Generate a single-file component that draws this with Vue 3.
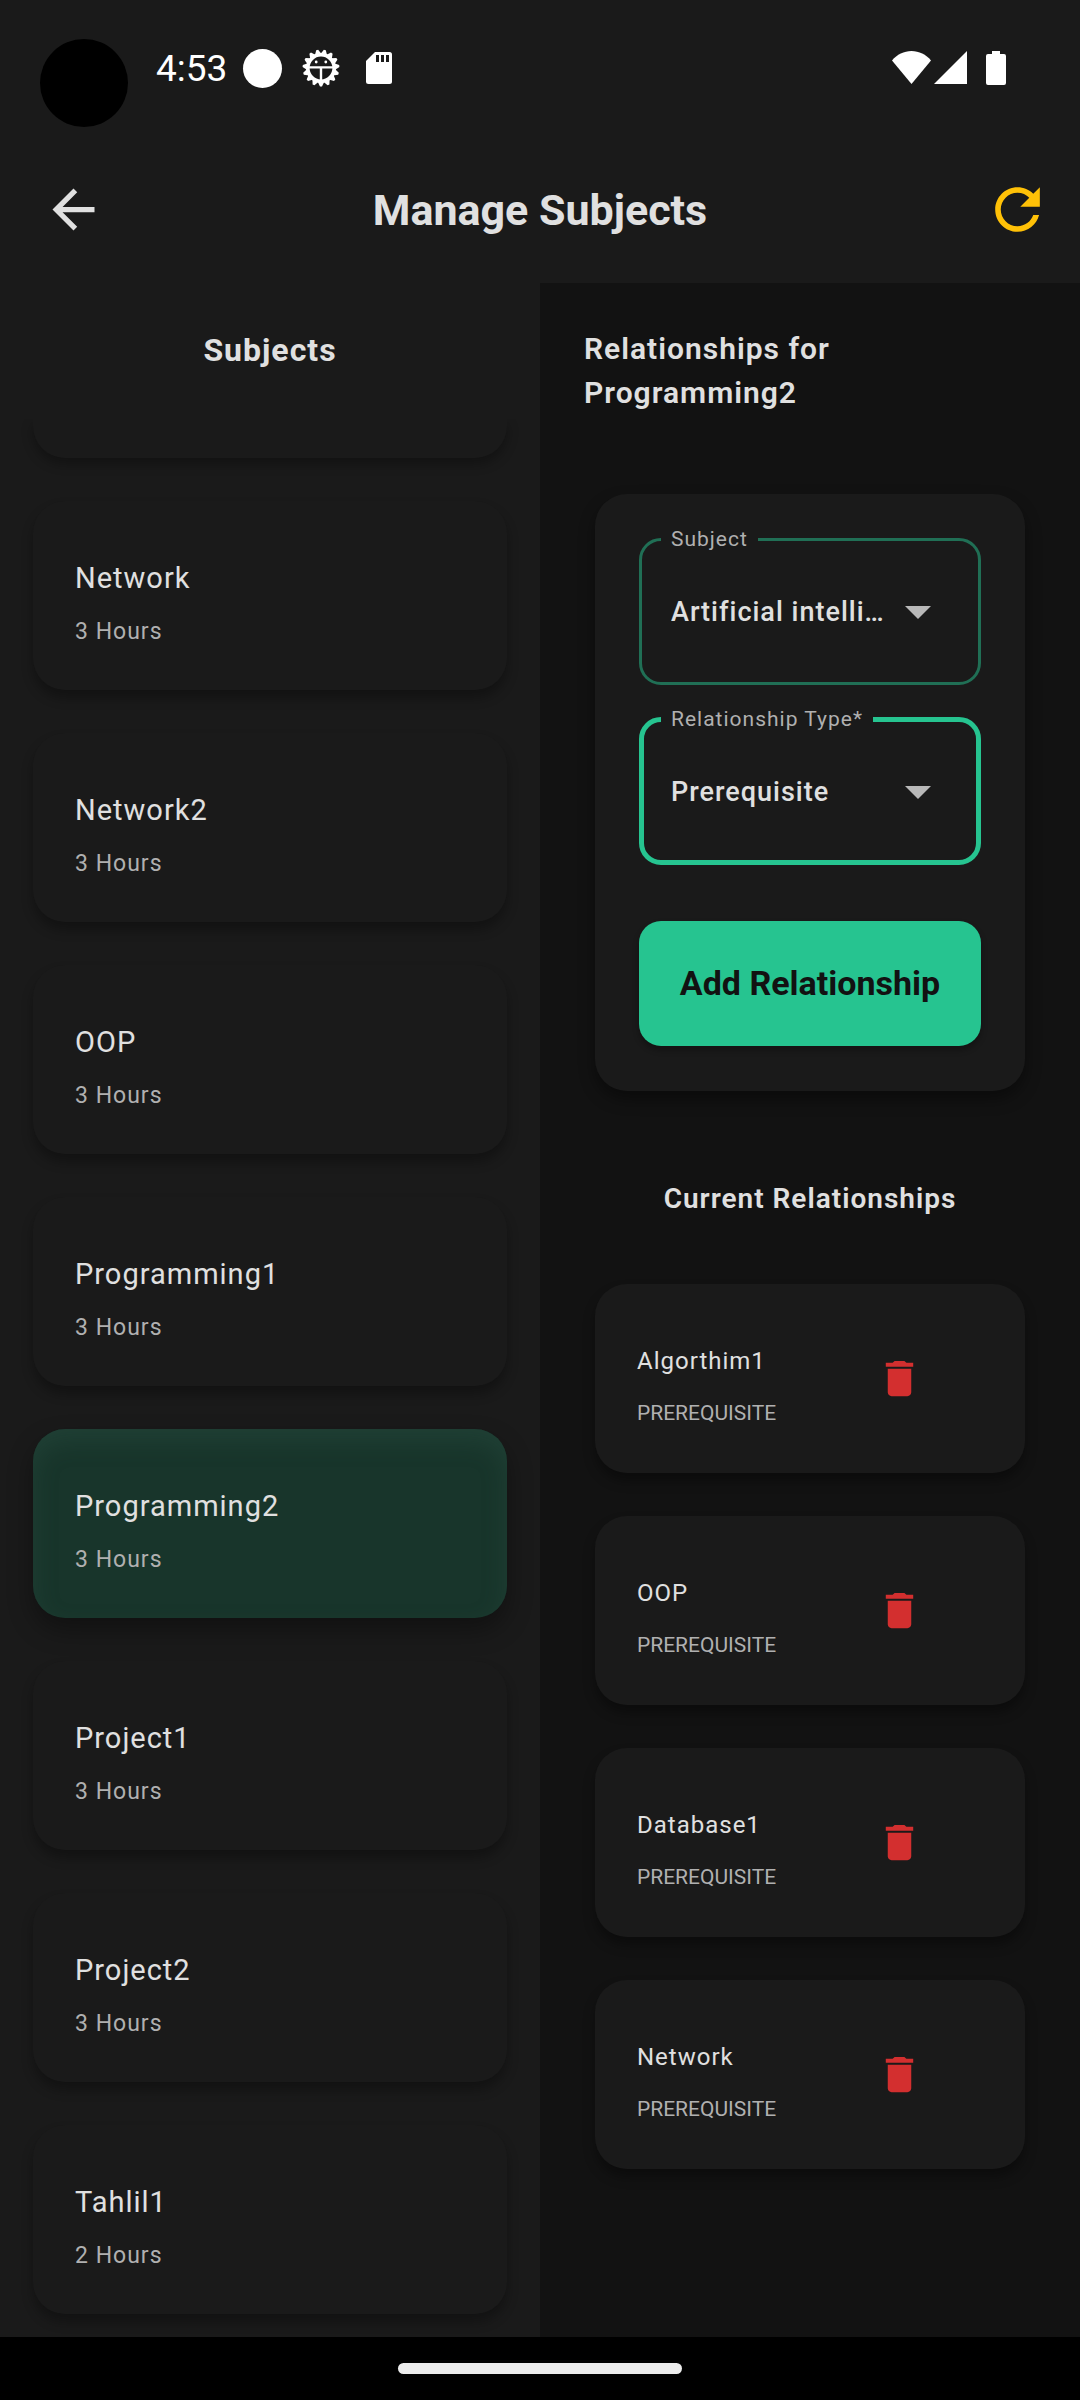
<script setup>
import { ref } from 'vue'

const subjects = [
  { name: 'Network', hours: 3 },
  { name: 'Network2', hours: 3 },
  { name: 'OOP', hours: 3 },
  { name: 'Programming1', hours: 3 },
  { name: 'Programming2', hours: 3 },
  { name: 'Project1', hours: 3 },
  { name: 'Project2', hours: 3 },
  { name: 'Tahlil1', hours: 2 },
]
const selected = ref('Programming2')

const relatedSubject = ref('Artificial intelligence')
const relationshipType = ref('Prerequisite')

const relationships = ref([
  { name: 'Algorthim1', type: 'PREREQUISITE' },
  { name: 'OOP', type: 'PREREQUISITE' },
  { name: 'Database1', type: 'PREREQUISITE' },
  { name: 'Network', type: 'PREREQUISITE' },
])

function removeRelationship(index) {
  relationships.value.splice(index, 1)
}

const gearTeeth = Array.from({ length: 15 }, (_, i) => i * 24 + 12)
</script>

<template>
  <div class="app">
    <div class="status-bar">
      <span class="camera"></span>
      <span class="time">4:53</span>
      <span class="dot"></span>
      <svg class="gear" viewBox="0 0 38 38" aria-hidden="true">
        <g fill="#fff">
          <path v-for="a in gearTeeth" :key="a" d="M15.6 5.500 L18 0.600 H20 L22.400 5.500 Z" :transform="`rotate(${a} 19 19)`" />
        </g>
        <circle cx="19" cy="19" r="13.200" fill="none" stroke="#fff" stroke-width="3.600" />
        <path d="M7 18.400H31M19 18.400V32" stroke="#fff" stroke-width="2.400" fill="none" />
        <circle cx="14.200" cy="13" r="1.400" fill="#fff" />
        <circle cx="23.800" cy="13" r="1.400" fill="#fff" />
      </svg>
      <svg class="sd" viewBox="0 0 26 32" aria-hidden="true">
        <path fill="#fff" d="M9 0H23.500Q26 0 26 2.500V29.500Q26 32 23.500 32H2.500Q0 32 0 29.500V9Z" />
        <path fill="#1a1a1a" d="M10 3h3v7h-3zM15 3h3v7h-3zM20 3h3v7h-3z" />
      </svg>
      <svg class="signals" viewBox="0 0 114 34" aria-hidden="true">
        <g fill="#fff">
          <path d="M19.500 33 0 9.500C5 3.500 12 0 19.500 0S34 3.500 39 9.500Z" />
          <path d="M42 33H75V0Z" />
          <path d="M100 0H108V3H112Q114 3 114 5V32Q114 34 112 34H96Q94 34 94 32V5Q94 3 96 3H100Z" />
        </g>
      </svg>
    </div>

    <header class="top-bar">
      <button class="icon-button back" type="button" aria-label="Back">
        <svg width="63" height="63" viewBox="0 0 24 24" fill="#e0e0e0">
          <path d="M20 11H7.830l5.590-5.590L12 4l-8 8 8 8 1.410-1.410L7.830 13H20v-2z" />
        </svg>
      </button>
      <h1>Manage Subjects</h1>
      <button class="icon-button refresh" type="button" aria-label="Refresh">
        <svg width="67" height="67" viewBox="0 0 24 24" fill="#ffc107">
          <path d="M17.650 6.350C16.200 4.900 14.210 4 12 4c-4.420 0-7.990 3.580-7.990 8s3.570 8 7.990 8c3.730 0 6.840-2.550 7.730-6h-2.080c-.820 2.330-3.040 4-5.650 4-3.310 0-6-2.690-6-6s2.690-6 6-6c1.660 0 3.140.690 4.220 1.780L13 11h7V4l-2.350 2.350z" />
        </svg>
      </button>
    </header>

    <main class="panes">
      <section class="subjects">
        <h2>Subjects</h2>
        <div class="subject-list">
          <div class="subject-peek" aria-hidden="true"></div>
          <button
            v-for="s in subjects"
            :key="s.name"
            type="button"
            class="subject-card"
            :class="{ selected: s.name === selected }"
            @click="selected = s.name"
          >
            <span class="subject-name">{{ s.name }}</span>
            <span class="subject-hours">{{ s.hours }} Hours</span>
          </button>
        </div>
      </section>

      <section class="details">
        <h2>Relationships for {{ selected }}</h2>

        <form class="form-card" @submit.prevent>
          <fieldset class="field">
            <legend><label for="subject">Subject</label></legend>
            <select id="subject" v-model="relatedSubject">
              <option>Artificial intelligence</option>
            </select>
            <svg class="caret" viewBox="0 0 26 13" aria-hidden="true"><path d="M0 0h26L13 13z" /></svg>
          </fieldset>
          <fieldset class="field active">
            <legend><label for="type">Relationship Type*</label></legend>
            <select id="type" v-model="relationshipType">
              <option>Prerequisite</option>
            </select>
            <svg class="caret" viewBox="0 0 26 13" aria-hidden="true"><path d="M0 0h26L13 13z" /></svg>
          </fieldset>
          <button class="add-button" type="submit">Add Relationship</button>
        </form>

        <h3>Current Relationships</h3>

        <ul class="relationship-list">
          <li v-for="(r, i) in relationships" :key="r.name" class="relationship-card">
            <div class="relationship-text">
              <span class="relationship-name">{{ r.name }}</span>
              <span class="relationship-type">{{ r.type }}</span>
            </div>
            <button class="delete-button" type="button" :aria-label="`Delete ${r.name}`" @click="removeRelationship(i)">
              <svg width="47" height="47" viewBox="0 0 24 24" fill="#d32f2f">
                <path d="M6 19c0 1.100.900 2 2 2h8c1.100 0 2-.900 2-2V7H6v12zM19 4h-3.500l-1-1h-5l-1 1H5v2h14V4z" />
              </svg>
            </button>
          </li>
        </ul>
      </section>
    </main>

    <footer class="nav-bar"><span class="nav-pill"></span></footer>
  </div>
</template>

<style>
body {
  margin: 0;
  background: #000;
}
</style>

<style scoped>
.app {
  display: flex;
  flex-direction: column;
  min-height: 100vh;
  background: #1a1a1a;
  color: #e0e0e0;
  font-family: Roboto, "Noto Sans", sans-serif;
}
h1,
h2,
h3 {
  margin: 0;
}
button {
  margin: 0;
  border: 0;
  font-family: inherit;
  color: inherit;
  cursor: pointer;
}
svg {
  display: block;
}

.status-bar {
  display: flex;
  align-items: center;
  height: 136px;
  box-sizing: border-box;
  padding: 0 74px 0 40px;
}
.camera {
  width: 88px;
  height: 88px;
  margin: 30px 28px 0 0;
  border-radius: 50%;
  background: #000;
}
.time {
  padding-top: 2px;
  font-size: 37px;
  line-height: 42px;
  color: #fff;
}
.dot {
  width: 39px;
  height: 39px;
  margin-left: 16px;
  border-radius: 50%;
  background: #fff;
}
.gear {
  width: 38px;
  height: 38px;
  margin-left: 20px;
}
.sd {
  width: 26px;
  height: 32px;
  margin-left: 26px;
}
.signals {
  width: 114px;
  height: 34px;
  margin-left: auto;
}

.top-bar {
  display: grid;
  grid-template-columns: 1fr auto 1fr;
  align-items: center;
  height: 147px;
}
.icon-button {
  display: flex;
  align-items: center;
  justify-content: center;
  width: 86px;
  height: 86px;
  padding: 0;
  background: none;
}
.back {
  margin-left: 30px;
}
.refresh {
  justify-self: end;
  margin-right: 20px;
}
h1 {
  font-size: 43px;
  line-height: 50px;
  font-weight: 700;
}

.panes {
  flex: 1;
  display: grid;
  grid-template-columns: 1fr 1fr;
}
.subjects {
  display: flex;
  flex-direction: column;
  min-width: 0;
}
.subjects h2 {
  padding: 43px 0 45px;
  font-size: 32px;
  line-height: 48px;
  font-weight: 700;
  letter-spacing: 1px;
  text-align: center;
}
.subject-list {
  flex: 1;
  display: flex;
  flex-direction: column;
  gap: 43px;
  padding: 0 33px 22px;
  overflow: hidden;
}
.subject-peek {
  height: 39px;
  border-radius: 0 0 32px 32px;
  background: #1a1a1a;
  box-shadow: 0 6px 12px rgba(0, 0, 0, 0.3);
}
.subject-card {
  display: flex;
  flex-direction: column;
  justify-content: center;
  gap: 16px;
  height: 189px;
  padding: 16px 42px 0;
  border-radius: 32px;
  background: #1a1a1a;
  box-shadow: 0 8px 12px rgba(0, 0, 0, 0.3);
  text-align: left;
}
.subject-card.selected {
  background: #18352b;
  box-shadow: 0 12px 24px rgba(0, 0, 0, 0.35), inset 0 12px 24px rgba(50, 90, 75, 0.3);
}
.subject-name {
  font-size: 29px;
  line-height: 40px;
  letter-spacing: 1px;
}
.subject-hours {
  font-size: 23px;
  line-height: 36px;
  letter-spacing: 1px;
  color: #b0b0b0;
}

.details {
  min-width: 0;
  padding: 44px 44px 0;
  background: #121212;
}
.details h2 {
  margin-bottom: 79px;
  font-size: 30px;
  line-height: 44px;
  font-weight: 600;
  letter-spacing: 1px;
}
.form-card {
  display: flex;
  flex-direction: column;
  margin: 0 11px;
  padding: 33px 44px 45px;
  border-radius: 32px;
  background: #1a1a1a;
  box-shadow: 0 8px 16px rgba(0, 0, 0, 0.4);
}
.field {
  position: relative;
  height: 158px;
  box-sizing: border-box;
  min-width: 0;
  margin: 0 0 22px;
  padding: 0 0 0 19px;
  border: 3px solid #206f55;
  border-radius: 22px;
}
.field.active {
  margin-bottom: 56px;
  padding-left: 17px;
  border: 5px solid #26c490;
}
.field legend {
  padding: 0 10px;
  font-size: 21px;
  line-height: 24px;
  letter-spacing: 1px;
  color: #b0b0b0;
}
.field select {
  display: block;
  width: 100%;
  height: 122px;
  margin: 0;
  padding: 0 90px 0 10px;
  border: 0;
  outline: 0;
  appearance: none;
  background: none;
  color: #e0e0e0;
  font-family: inherit;
  font-size: 27px;
  font-weight: 500;
  letter-spacing: 1px;
  text-overflow: ellipsis;
}
.caret {
  position: absolute;
  right: 47px;
  top: 55px;
  width: 26px;
  height: 13px;
  fill: #b8b8b8;
  pointer-events: none;
}
.active .caret {
  right: 45px;
}
.add-button {
  height: 125px;
  padding: 0 0 2px;
  border-radius: 22px;
  background: #26c490;
  box-shadow: 0 4px 6px rgba(0, 0, 0, 0.3);
  color: #121212;
  font-size: 34px;
  font-weight: 700;
}

.details h3 {
  margin: 86px 0 63px;
  font-size: 28px;
  line-height: 44px;
  font-weight: 600;
  letter-spacing: 1px;
  text-align: center;
}
.relationship-list {
  display: flex;
  flex-direction: column;
  gap: 43px;
  margin: 0 11px;
  padding: 0;
  list-style: none;
}
.relationship-card {
  display: flex;
  align-items: center;
  justify-content: space-between;
  height: 189px;
  box-sizing: border-box;
  padding: 0 63px 0 42px;
  border-radius: 32px;
  background: #1a1a1a;
  box-shadow: 0 8px 12px rgba(0, 0, 0, 0.35);
}
.relationship-text {
  display: flex;
  flex-direction: column;
  gap: 16px;
  padding-top: 16px;
}
.relationship-name {
  font-size: 24px;
  line-height: 36px;
  letter-spacing: 1px;
}
.relationship-type {
  font-size: 21px;
  line-height: 36px;
  color: #b0b0b0;
}
.delete-button {
  display: flex;
  align-items: center;
  justify-content: center;
  width: 126px;
  height: 126px;
  padding: 0;
  background: none;
}

.nav-bar {
  display: flex;
  align-items: center;
  justify-content: center;
  height: 63px;
  background: #000;
}
.nav-pill {
  width: 284px;
  height: 11px;
  border-radius: 6px;
  background: #ececec;
}
</style>
